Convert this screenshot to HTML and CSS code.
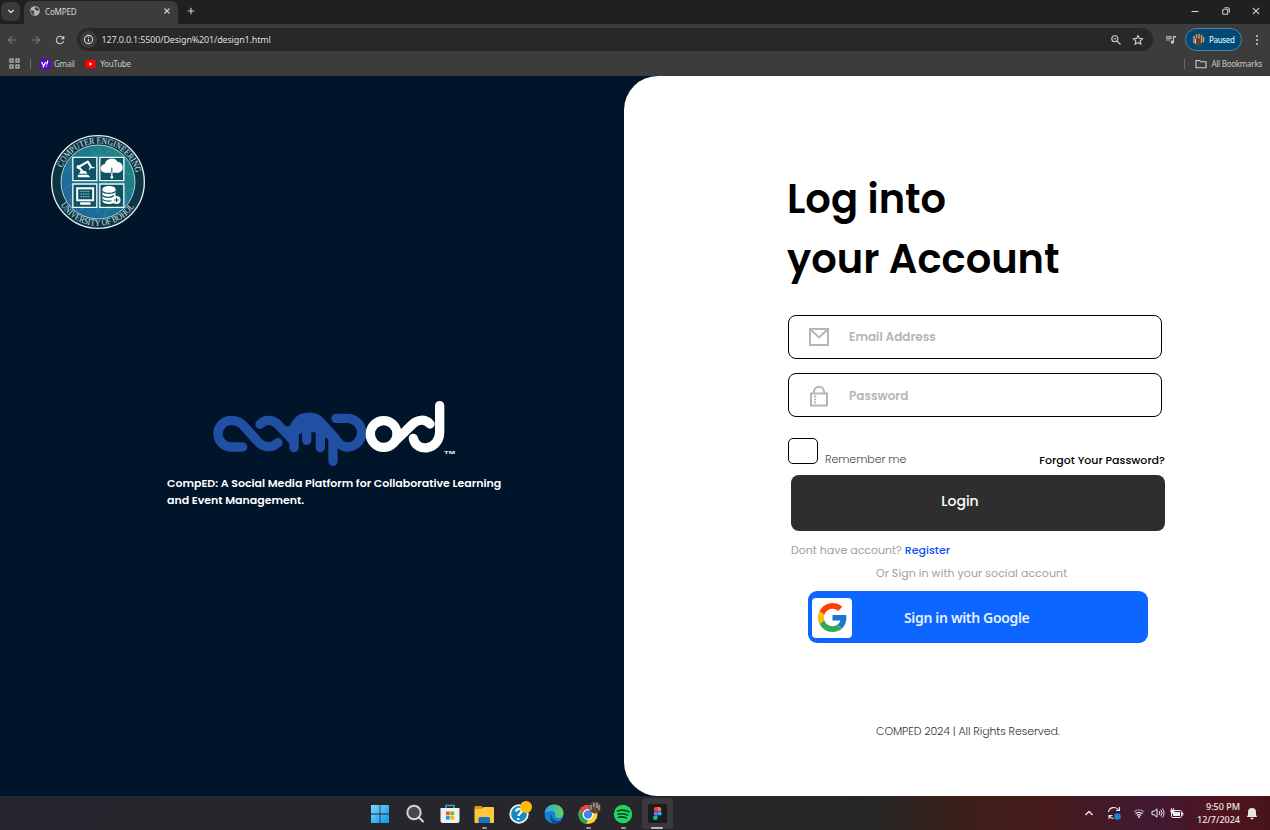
FILE: index.html
```html
<!DOCTYPE html>
<html lang="en">
<head>
<meta charset="utf-8">
<title>CoMPED</title>
<link rel="stylesheet" href="styles.css">
</head>
<body>
<header class="browser">
  <div class="tabstrip">
    <span class="tab-menu"><svg width="10" height="10" viewBox="0 0 10 10" class="line bold"><path d="M2.300 4l2.700 2.500L7.700 4"/></svg></span>
    <div class="tab">
      <svg width="10" height="10" viewBox="0 0 10 10"><circle cx="5" cy="5" r="4.800" fill="#b4b9c0"/><path d="M1 4.200l2.500.3 1 1-.4 1.400.5 1.900L2 8.500 1 6zM5 1l3 1 1 2.500-1.800.6L6 4.300 4.600 3z" fill="#45484b"/></svg>
      <span class="tab-title">CoMPED</span>
      <svg width="8" height="8" viewBox="0 0 8 8" class="line"><path d="M1.500 1.500l5 5M6.500 1.500l-5 5"/></svg>
    </div>
    <svg class="new-tab line" width="10" height="10" viewBox="0 0 10 10"><path d="M5 1.800v6.400M1.800 5h6.400"/></svg>
    <div class="window-buttons">
      <svg width="10" height="10" viewBox="0 0 10 10" class="line"><path d="M1.500 5.500h7"/></svg>
      <svg width="10" height="10" viewBox="0 0 10 10" class="line"><rect x="1.700" y="3.300" width="5" height="5" rx="1"/><path d="M3.500 1.800h3.200a1.600 1.600 0 0 1 1.600 1.600v3"/></svg>
      <svg width="10" height="10" viewBox="0 0 10 10" class="line"><path d="M1.800 1.800l6.400 6.400M8.200 1.800l-6.400 6.400"/></svg>
    </div>
  </div>
  <div class="toolbar">
    <svg class="line dim" width="12" height="12" viewBox="0 0 12 12"><path d="M10 6H2.500M6 2.300L2.300 6 6 9.700"/></svg>
    <svg class="line dim" width="12" height="12" viewBox="0 0 12 12"><path d="M2 6h7.500M6 2.300L9.700 6 6 9.700"/></svg>
    <svg class="line" width="12" height="12" viewBox="0 0 12 12"><path d="M9.500 7.200A3.700 3.700 0 1 1 8.700 3.500L9.700 4.600M9.800 2v2.800H7"/></svg>
    <div class="address">
      <span class="info"><svg class="line" width="11" height="11" viewBox="0 0 11 11"><circle cx="5.500" cy="5.500" r="4.100"/><path d="M5.500 5v2.700M5.500 3.100v1"/></svg></span>
      <span class="url">127.0.0.1:5500/Design%201/design1.html</span>
      <svg class="line" width="12" height="12" viewBox="0 0 12 12"><circle cx="4.800" cy="4.800" r="3"/><path d="M7.200 7.200l3.300 3.300M3.500 4.800h2.600"/></svg>
      <svg class="line" width="12" height="12" viewBox="0 0 12 12"><path d="M6 1.500l1.350 2.900 3.150.4-2.300 2.150.6 3.150L6 8.550 3.200 10.100l.6-3.150L1.500 4.800l3.150-.4z"/></svg>
    </div>
    <svg class="media" width="12" height="12" viewBox="0 0 12 12"><path d="M1 2h6v1.200H1zM1 3.700h6v1.200H1zM1 5.400h4.500v1.200H1z" fill="#a8a8a8"/><path d="M8 2h3v1.500H9V8a1.600 1.600 0 1 1-1-1.400z" fill="#c8c8c8"/></svg>
    <div class="profile">
      <svg width="13" height="13" viewBox="0 0 13 13"><circle cx="6.500" cy="6.500" r="6.500" fill="#3b4547"/><path d="M2 3v7M4.500 1.500v4M7 1v5M9.500 2v8M11.500 4v5" stroke="#c39d74" stroke-width="1.400"/><path d="M6.500 5v8" stroke="#873b2b" stroke-width="1.500"/><path d="M3.500 6v5" stroke="#ddd1ba"/></svg>
      <span>Paused</span>
    </div>
    <svg class="kebab" width="4" height="12" viewBox="0 0 4 12" fill="#d2d2d2"><circle cx="2" cy="2" r="1"/><circle cx="2" cy="6" r="1"/><circle cx="2" cy="10" r="1"/></svg>
  </div>
  <div class="bookmarks">
    <svg class="line" width="11" height="11" viewBox="0 0 11 11"><path d="M1 1h3v3H1zM7 1h3v3H7zM1 7h3v3H1zM7 7h3v3H7z"/></svg>
    <i class="divider"></i>
    <svg width="10" height="10" viewBox="0 0 10 10"><rect width="10" height="10" fill="#5f01d1"/><path d="M1.500 3l2 3.500M5.500 3L3 8.500M7.800 1.500L6.700 5.700M6.200 7.300h.8" stroke="#fff" stroke-width="1.300"/></svg>
    <span class="bm-gmail">Gmail</span>
    <svg width="11" height="8" viewBox="0 0 11 8"><rect width="11" height="8" rx="2.200" fill="#f00"/><path d="M4.300 2.200v3.600L7.500 4z" fill="#fff"/></svg>
    <span class="bm-youtube">YouTube</span>
    <i class="divider right"></i>
    <svg class="line" width="12" height="10" viewBox="0 0 12 10"><path d="M1 1.500h3.500l1.200 1.300H11v6H1z"/></svg>
    <span class="bm-all">All Bookmarks</span>
  </div>
</header>

<main class="page">
  <section class="brand">
    <svg class="seal" width="96" height="96" viewBox="28.500 27 288 288">
      <defs>
        <linearGradient id="sea" x1="0" y1="1" x2="1" y2="0"><stop offset="0" stop-color="#1d62a0"/><stop offset=".5" stop-color="#1b7590"/><stop offset="1" stop-color="#218a7c"/></linearGradient>
        <path id="arc-top" d="M65 128A116 116 0 0 1 287.500 155"/>
        <path id="arc-low" d="M60.500 240A132 132 0 0 0 284.500 240"/>
      </defs>
      <circle cx="172.500" cy="171" r="139" fill="#0b3545" stroke="#e6eeee" stroke-width="4"/>
      <circle cx="172.500" cy="171" r="111" fill="url(#sea)" stroke="#d5e5e6" stroke-width="2.500"/>
      <g fill="none" stroke="#5da6b5" stroke-width="1.500" opacity=".75"><path d="M75 140l20-20V95l18-16M72 190l22-12M85 225l32-14 20 24 24 5 12 25M120 255l18-12M210 75l-18 15h-30l-14-18M238 90l14 14v36l26 12M277 190l-20 10v30l-20 20M190 275l8-22 26-8M108 250l-20-25M220 86l22-5M176 70l6 18M176 262v-16l20-10"/></g>
      <g fill="#0d5364" stroke="#f2f7f7" stroke-width="4"><path d="M97 97h72v70H97zM178 97h72v70h-72zM97 177h72v70H97zM178 177h72v70h-72z"/></g>
      <g fill="#fff">
        <path d="M112 149h31l6 8h-37zM116 146l4-8h16l4 8z"/>
        <circle cx="114" cy="126" r="6"/>
        <path d="M194 143a13 13 0 0 1-1-26 21 21 0 0 1 38-7 17 17 0 0 1 4 33z"/><path d="M212 143h4v13h-4z"/><circle cx="214" cy="157" r="4"/>
        <path d="M107 187h54v42h-54zM119 232h31v7h-31z"/>
        <path d="M186 193c0-13 39-13 39 0v34c0 13-39 13-39 0z"/><circle cx="228" cy="225" r="12"/>
      </g>
      <path d="M128 141L114 126 142 110 152 127" fill="none" stroke="#fff" stroke-width="6.500" stroke-linejoin="round"/>
      <path d="M146 134l4-7 12 1" fill="none" stroke="#fff" stroke-width="3.500"/>
      <path d="M113 193h42v30h-42z" fill="#0d5364"/>
      <path d="M120 199h28M120 207h28M120 215h28" stroke="#8dc3ca" stroke-width="3" stroke-dasharray="5 2"/>
      <path d="M186 199c6 8 33 8 39 0M186 211c6 8 28 8 34 0M186 223c6 6 22 6 27 4M228 218v14M221 225h14" fill="none" stroke="#0d5364" stroke-width="3.500"/>
      <path d="M214 128v15" stroke="#0d5364" stroke-width="3"/>
      <text class="seal-text" textLength="292" lengthAdjust="spacingAndGlyphs"><textPath href="#arc-top">COMPUTER ENGINEERING</textPath></text>
      <text class="seal-text" textLength="262" lengthAdjust="spacingAndGlyphs"><textPath href="#arc-low">UNIVERSITY OF BOHOL</textPath></text>
    </svg>
    <div class="brand-body">
      <svg class="logo" width="270" height="85" viewBox="0 0 810 255">
        <g fill="none" stroke="#214fa3" stroke-width="28" stroke-linecap="round" stroke-linejoin="round">
          <path d="M128 171H94A40 40 0 0 1 94 91C117 91 127 103 138 115L170 151C188 173 216 176 234 158"/>
          <path d="M180 103C197 85 221 88 237 107L282 155"/>
          <path d="M282 173V125C284 75 343 72 363 98L402 141C415 160 424 171 442 171A43 43 0 0 0 442 85H408"/>
          <path d="M320 110V151M361 115V173M399 145V214"/>
        </g>
        <path d="M270 108C284 66 345 60 372 94L413 146V165H386V148L374 143H348V128L333 125V138H307V128L296 135V150H270L230 113Z" fill="#214fa3"/>
        <g fill="none" stroke="#fff" stroke-width="28" stroke-linecap="round" stroke-linejoin="round">
          <ellipse cx="551" cy="132" rx="40" ry="40"/>
          <path d="M583 156L637 103C653 88 674 86 690 102"/>
          <path d="M719 47V126C719 181 649 190 640 145"/>
        </g>
        <text x="732" y="193" class="tm" textLength="33" lengthAdjust="spacingAndGlyphs">TM</text>
      </svg>
      <p class="tagline">CompED: A Social Media Platform for Collaborative Learning<br>and Event Management.</p>
    </div>
  </section>

  <section class="login">
    <h1>Log into<br>your Account</h1>
    <label class="field"><svg width="22" height="22" viewBox="0 0 22 22" fill="none" stroke="#b5b5b5" stroke-width="2"><path d="M2 3h18v16H2zM2.500 3.500L11 11.500l8.500-8"/></svg><span>Email Address</span></label>
    <label class="field password"><svg width="22" height="22" viewBox="0 0 22 22" fill="none" stroke="#b5b5b5" stroke-width="2"><path d="M3 8.500h16V20.500H3zM6 8.500V6.800a5 5 0 0 1 10 0v1.700"/><path d="M7 10.500v9" stroke-dasharray="1.700 1.300"/></svg><span>Password</span></label>
    <div class="options"><i class="checkbox"></i><span class="remember">Remember me</span><a class="forgot">Forgot Your Password?</a></div>
    <div class="login-button">Login</div>
    <p class="register">Dont have account? <a>Register</a></p>
    <p class="social">Or Sign in with your social account</p>
    <div class="google">
      <span class="g-box"><svg width="29" height="29" viewBox="0 0 48 48"><path fill="#fbbc05" d="M10.500 28.600A14 14 0 0 1 10.500 19.400L2.600 13.200A24 24 0 0 0 2.600 34.800z"/><path fill="#ff3d00" d="M24 9.500c3.500 0 6.700 1.200 9.200 3.600l6.900-6.900A24 24 0 0 0 2.600 13.200l8 6.200C12.400 13.700 17.700 9.500 24 9.500z"/><path fill="#1976d2" d="M47 24.500c0-1.600-.2-3.100-.4-4.500H24v9h12.900a11 11 0 0 1-4.800 7.200l7.700 6C44.400 38 47 31.800 47 24.500z"/><path fill="#34a853" d="M24 48c6.500 0 11.900-2.100 15.900-5.800l-7.700-6c-2.200 1.500-4.900 2.300-8.200 2.300-6.300 0-11.600-4.200-13.500-9.900l-7.900 6.200A24 24 0 0 0 24 48z"/></svg></span>
      <span class="g-text">Sign in with Google</span>
    </div>
    <footer>COMPED 2024 | All Rights Reserved.</footer>
  </section>
</main>

<nav class="taskbar">
  <div class="apps">
    <span class="app"><svg width="20" height="20" viewBox="0 0 20 20"><defs><linearGradient id="win" x2="1" y2="1"><stop stop-color="#79d8ff"/><stop offset="1" stop-color="#1096e8"/></linearGradient></defs><path fill="url(#win)" d="M1 1h8.600v8.600H1zM10.400 1H19v8.600h-8.600zM1 10.400h8.600V19H1zM10.400 10.400H19V19h-8.600z"/></svg></span>
    <span class="app"><svg width="20" height="20" viewBox="0 0 20 20" fill="#47474b" stroke="#d5d5d5" stroke-width="2"><circle cx="9" cy="8.500" r="6.700"/><path d="M14 13.500l4 4" stroke-linecap="round"/></svg></span>
    <span class="app"><svg width="20" height="20" viewBox="0 0 20 20"><path d="M6 5V1.500h8V5" fill="none" stroke="#32a9e0" stroke-width="1.500"/><path d="M.5 4h19v13a2 2 0 0 1-2 2h-15a2 2 0 0 1-2-2z" fill="#f0f0f0"/><path fill="#ef4f23" d="M6 7.500h3.700v3.700H6z"/><path fill="#7eba00" d="M10.400 7.500h3.700v3.700h-3.700z"/><path fill="#15a0e8" d="M6 12h3.700v3.700H6z"/><path fill="#fcb900" d="M10.400 12h3.700v3.700h-3.700z"/></svg></span>
    <span class="app run"><svg width="20" height="20" viewBox="0 0 20 20"><path d="M.5 3a1 1 0 0 1 1-1h6l2 3h-9z" fill="#d9980b"/><path d="M.5 5h7l2-2H19a1 1 0 0 1 1 1v14a1 1 0 0 1-1 1H1.500a1 1 0 0 1-1-1z" fill="#fdc740"/><path d="M4.500 19v-4.500A1.500 1.500 0 0 1 6 13h8.500a1.500 1.500 0 0 1 1.500 1.500V19z" fill="#1375c4"/></svg></span>
    <span class="app"><svg class="raised" width="24" height="24" viewBox="0 0 24 24"><circle cx="11" cy="13" r="8.800" fill="#168bc2" stroke="#e9f5f8" stroke-width="1.800"/><path d="M8 10.500c1-4 7-3 5.500.3-.8 1.800-2.700 1.500-2.900 4.200M10.300 17v2" fill="none" stroke="#fff" stroke-width="2.300"/><circle cx="18" cy="6" r="6" fill="#ffba0a"/></svg></span>
    <span class="app"><svg width="20" height="20" viewBox="0 0 20 20"><defs><linearGradient id="edge"><stop stop-color="#25a7e8"/><stop offset="1" stop-color="#66d45a"/></linearGradient></defs><circle cx="10" cy="10" r="9.500" fill="#1580d8"/><path d="M.6 9C1.500 3.500 5.500.5 10 .5c5.500 0 9.500 4 9.500 8.500 0 3-2 5-5 5-2.500 0-3.500-1-3.500-2 1-3-1-5-4-5S1.500 8 .6 9z" fill="url(#edge)"/><path d="M8 10c-1 3 1 7 6 7 1.500 0 2.500-.3 4-1-2 3-5 3.800-8 3.500C6.500 18.500 5 12.500 8 10z" fill="#174b88"/></svg></span>
    <span class="app run"><svg class="raised" width="24" height="24" viewBox="0 0 24 24"><circle cx="11" cy="13.500" r="9.500" fill="#ffcf32"/><path d="M2.700 9A9.500 9.500 0 0 1 19.300 9H11l-4 7z" fill="#ee4538"/><path d="M2.700 9l5 8 3.300 2-2 4A9.500 9.500 0 0 1 2.700 9z" fill="#25a55a"/><circle cx="11" cy="13.500" r="4.800" fill="#3a87ef" stroke="#fff" stroke-width="1.300"/><circle cx="18" cy="6.500" r="6" fill="#50463f"/><path d="M14 4v5M17 2v4M20 2v5M22 4v5" stroke="#c5af93" stroke-width="1.200"/><path d="M18 6v6" stroke="#913d2b" stroke-width="1.500"/></svg></span>
    <span class="app run"><svg width="20" height="20" viewBox="0 0 20 20"><circle cx="10" cy="10" r="9.200" fill="#1ed760"/><path d="M4.500 7c4-1.300 8-1 11.500.8M5 10.300c3.500-1 6.700-.7 9.700.8M5.500 13.200c3-.7 5.500-.4 8 .9" fill="none" stroke="#163c28" stroke-width="1.600" stroke-linecap="round"/></svg></span>
    <span class="app active"><svg width="19" height="19" viewBox="0 0 19 19"><rect width="19" height="19" rx="1.500" fill="#1b1b1d"/><path d="M9.500 3H7.500a2.200 2.200 0 0 0 0 4.300h2z" fill="#f24e1e"/><path d="M9.500 3h2a2.200 2.200 0 0 1 0 4.300h-2z" fill="#ff7262"/><path d="M9.500 7.300h-2a2.200 2.200 0 0 0 0 4.300h2z" fill="#a259ff"/><circle cx="11.600" cy="9.450" r="2.150" fill="#1abcfe"/><path d="M9.500 11.600h-2a2.200 2.200 0 1 0 2 2.200z" fill="#0acf83"/></svg></span>
  </div>
  <div class="tray">
    <svg width="10" height="10" viewBox="0 0 10 10" fill="none" stroke="#eee" stroke-width="1.300"><path d="M1.500 7L5 3.500 8.500 7"/></svg>
    <svg class="sync" width="14" height="14" viewBox="0 0 14 14" fill="none" stroke="#eee" stroke-width="1.100"><path d="M1.500 6a5.500 5.500 0 0 1 10-2M12.500 1v3.500H9M2 13V9.500h3.500M2.500 10a5.500 5.500 0 0 0 4 2.500"/><circle cx="10.500" cy="10.500" r="3.300" fill="#1683e5" stroke="none"/></svg>
    <svg class="wifi" width="12" height="12" viewBox="0 0 12 12" fill="none" stroke="#eee" stroke-width="1.200"><path d="M1 5a7 7 0 0 1 10 0" opacity=".5"/><path d="M2.500 6.800a5 5 0 0 1 7 0M4 8.500a3 3 0 0 1 4 0"/><circle cx="6" cy="10" r="1" fill="#eee" stroke="none"/></svg>
    <svg class="sound" width="14" height="12" viewBox="0 0 14 12" fill="none" stroke="#eee"><path d="M1 4.300h2L6 1.800v8.400L3 7.700H1zM8 4a3 3 0 0 1 0 4M9.700 2.700a5 5 0 0 1 0 6.600M11.400 1.500a7 7 0 0 1 0 9"/></svg>
    <svg class="battery" width="14" height="12" viewBox="0 0 14 12"><rect x="1.500" y="3.500" width="10" height="7" rx="1.200" fill="none" stroke="#eee"/><path d="M3 5h7v4H3z" fill="#eee"/><path d="M12.700 5.500v3" stroke="#eee" stroke-width="1.200"/><path d="M1.500 1v2M3.500 1v2M.8 3h3.400v1.500a1.700 1.700 0 0 1-3.400 0z" stroke="#eee" fill="#eee" stroke-width=".8"/></svg>
    <div class="clock"><span>9:50 PM</span><span>12/7/2024</span></div>
    <svg class="bell" width="12" height="13" viewBox="0 0 12 13"><path d="M6 1a4 4 0 0 1 4 4v3l1.300 2H.7L2 8V5a4 4 0 0 1 4-4zM4.300 10.800h3.400a1.700 1.700 0 0 1-3.400 0z" fill="#e8e4e4"/></svg>
  </div>
</nav>
</body>
</html>
```
FILE: styles.css
```css
* { box-sizing: border-box; }
body { margin: 0; width: 1270px; height: 830px; overflow: hidden; display: flex; flex-direction: column; font-family: Poppins, Inter, sans-serif; }
svg { display: block; flex: none; }
p, h1 { margin: 0; }
p, span, a { white-space: nowrap; }

.browser { height: 76px; background: #3c3c3c; color: #d9d9d9; font-family: "Noto Sans", sans-serif; font-size: 8px; }
.line { fill: none; stroke: #d0d0d0; stroke-width: 1.1; }
.bold { stroke-width: 1.5; }
.dim { stroke: #7c7c7c; }
.tabstrip { height: 24px; background: #1f2120; display: flex; align-items: center; }
.tab-menu { width: 19px; height: 19px; margin: -2px 0 0 1px; border-radius: 6px; background: #3a3a3a; display: grid; place-items: center; }
.tab { width: 154px; height: 23px; margin: 1px 0 0 4px; padding: 0 7px 3px 6px; border-radius: 7px 7px 0 0; background: #3c3c3c; display: flex; align-items: center; }
.tab-title { flex: 1; margin-left: 5px; letter-spacing: -.15px; }
.new-tab { margin: -2px 0 0 8px; }
.window-buttons { margin: -2px 9px 0 auto; display: flex; gap: 20.5px; }
.toolbar { height: 31px; padding-left: 6px; display: flex; align-items: center; }
.toolbar > .line { margin-right: 12px; }
.toolbar > .line:nth-child(3) { margin-right: 11px; }
.address { width: 1076px; height: 23px; border-radius: 12px; background: #282828; display: flex; align-items: center; padding: 0 9.5px 0 3px; gap: 10px; }
.info { width: 17px; height: 17px; border-radius: 50%; background: #3b3b3b; display: grid; place-items: center; }
.url { flex: 1; margin-left: -5.5px; font-size: 9px; letter-spacing: -.17px; color: #dedede; }
.media { margin-left: 12px; }
.profile { margin-left: 8px; width: 57px; height: 23px; border: 1px solid #5c7f94; border-radius: 12px; background: #004a77; color: #d6ecfa; display: flex; align-items: center; padding-left: 6px; gap: 4px; letter-spacing: -.4px; }
.profile span { font-weight: 500; }
.kebab { margin-left: 13px; }
.bookmarks { height: 18px; padding: 0 8px 1px 9px; display: flex; align-items: center; }
.divider { width: 1px; height: 10px; background: #6a6a6a; margin: 0 9px 0 10px; }
.divider.right { margin: 0 10px 0 auto; }
.bookmarks span { margin-left: 4px; color: #c9c9c9; letter-spacing: -.25px; }
.bookmarks .bm-gmail { margin-right: 10.5px; }

.page { height: 720px; background: #00142a; display: flex; }
.brand { width: 624px; padding: 58px 0 0 50px; }
.brand-body { margin: 160px 0 0 117px; }
.logo { margin-left: 33px; }
.tagline { color: #fff; font-weight: 600; font-size: 11px; line-height: 17px; }
.seal-text { font-family: "Liberation Serif", serif; font-size: 27px; fill: #dae8e8; }
.tm { font: bold 13px "Liberation Sans", sans-serif; fill: #fff; }

.login { width: 646px; height: 720px; border-radius: 34px 0 0 34px; background: #fff; padding: 93px 0 0 164px; display: flex; flex-direction: column; align-items: flex-start; }
h1 { font-weight: 600; font-size: 40px; line-height: 60px; margin: 0 0 26px -1px; }
.field { width: 374px; height: 44px; border: 1px solid #000; border-radius: 8px; margin: 0 0 14px; display: flex; align-items: center; padding-left: 19px; gap: 19px; color: #b5b5b5; font-weight: 600; font-size: 12px; }
.password { padding-top: 2px; }
.options { width: 377px; height: 27px; margin-top: 7px; display: flex; align-items: flex-start; font-size: 11px; line-height: 14px; }
.checkbox { width: 30px; height: 26px; border: 1px solid #000; border-radius: 5px; margin-right: 7px; }
.remember { margin-top: 14px; font-weight: 300; letter-spacing: -.06px; color: #444; }
.forgot { margin: 15px 0 0 auto; font-weight: 500; }
.login-button { width: 374px; height: 56px; margin: 10px 0 0 3px; background: #2e2e2e; border-radius: 8px; color: #fff; font-weight: 500; font-size: 14px; line-height: 52px; text-align: center; padding-right: 36px; }
.register { margin: 12px 0 0 3px; font-size: 11px; line-height: 15px; color: #a0a0a0; }
.register a { color: #0b50f4; font-weight: 500; }
.social { margin: 8px 0 0 88px; font-size: 11px; line-height: 15px; letter-spacing: .06px; color: #a0a0a0; }
.google { width: 340px; height: 52px; margin: 10px 0 0 20px; border-radius: 9px; background: #0d66ff; display: flex; align-items: center; padding: 1px 0 0 4px; }
.g-box { width: 40px; height: 40px; background: #fff; border-radius: 4px; display: grid; place-items: center; }
.g-text { margin-left: 52px; color: #e6f0ff; font: 600 14px "Noto Sans", sans-serif; letter-spacing: -.33px; }
footer { margin: 80px 0 0 88px; font-weight: 300; font-size: 11px; line-height: 16px; letter-spacing: -.1px; color: #333; }

.taskbar { height: 34px; background: linear-gradient(90deg, #25252d 0, #27262c 45%, #252526 68%, #3c1f18 76%, #471c1a 82%, #411833 91%, #50141f 96%, #48141c 100%); display: flex; justify-content: space-between; }
.apps { display: flex; margin-left: 363px; padding-top: 2px; }
.app { width: 34.7px; height: 31px; display: grid; place-items: center; position: relative; }
.app.active { width: 31px; margin-left: 1px; background: #3a383d; border-radius: 3px; }
.app.run::after, .app.active::after { content: ""; position: absolute; bottom: 0; width: 5px; height: 2px; border-radius: 1px; background: #999; }
.app.active::after { width: 12px; background: #b8b8b8; }
.raised { margin: -2px 0 0 2px; }
.tray { display: flex; align-items: center; padding-right: 12px; color: #f1e7e9; }
.sync { margin-left: 13px; }
.wifi { margin-left: 12px; }
.sound { margin-left: 6px; }
.battery { margin-left: 5px; }
.clock { width: 56px; padding-top: 1px; display: flex; flex-direction: column; text-align: right; font: 500 9px/12.5px "Noto Sans", sans-serif; }
.bell { margin-left: 6px; }
```
